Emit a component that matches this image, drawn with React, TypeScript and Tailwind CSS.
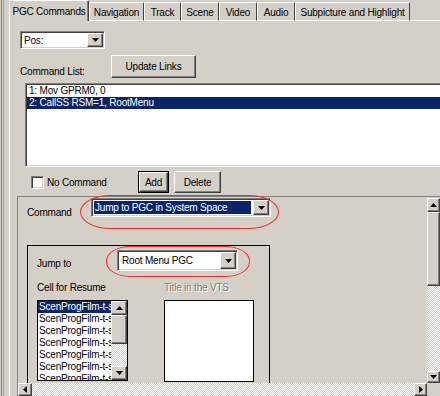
import React from 'react';

// Windows-classic 3D edges
const raised =
  'border border-t-white border-l-white border-r-[#404040] border-b-[#404040] shadow-[inset_-1px_-1px_#808080]';
const sunken =
  'border border-t-[#808080] border-l-[#808080] border-r-white border-b-white shadow-[inset_1px_1px_#404040,inset_-1px_-1px_#d4d0c8]';
const checker =
  'bg-[image:repeating-conic-gradient(#ffffff_0%_25%,#d4d0c8_0%_50%)] bg-[length:2px_2px]';

const Arrow: React.FC<{ dir: 'down' | 'up' | 'left' | 'right' }> = ({ dir }) => {
  const pts = {
    down: '0,0 7,0 3.5,4',
    up: '0,4 7,4 3.5,0',
    left: '4,0 4,7 0,3.5',
    right: '0,0 0,7 4,3.5',
  }[dir];
  const vb = dir === 'down' || dir === 'up' ? '0 0 7 4' : '0 0 4 7';
  return (
    <svg viewBox={vb} className={dir === 'down' || dir === 'up' ? 'w-[7px] h-[4px]' : 'w-[4px] h-[7px]'}>
      <polygon points={pts} fill="#000" />
    </svg>
  );
};

const DropButton: React.FC = () => (
  <div className={`w-[16px] shrink-0 bg-[#d4d0c8] flex items-center justify-center ${raised}`}>
    <Arrow dir="down" />
  </div>
);

const tabs = [
  { label: 'Navigation', w: 'w-[55px]' },
  { label: 'Track', w: 'w-[37px]' },
  { label: 'Scene', w: 'w-[38px]' },
  { label: 'Video', w: 'w-[38px]' },
  { label: 'Audio', w: 'w-[38px]' },
  { label: 'Subpicture and Highlight', w: 'w-[115px]' },
];

const cellItems = Array.from({ length: 7 }, () => 'ScenProgFilm-t-s');

export default function App() {
  return (
    <div className="relative w-[440px] h-[396px] overflow-hidden bg-[#d4d0c8] flex text-[10px] tracking-[-0.2px] leading-[13px] text-black whitespace-nowrap font-['Liberation_Sans',Arial,sans-serif]">
      {/* outer window edge */}
      <div className="w-px" />
      <div className="w-px bg-[#808080]" />
      <div className="w-px" />
      <div className="w-px bg-[#a0a0a0]" />
      <div className="w-[5px]" />

      <div className="flex-1 min-w-0 flex flex-col">
        {/* tab strip */}
        <div className="h-[21px] flex items-end shrink-0">
          <div className="w-[80px] h-[21px] shrink-0 border-t border-l border-white border-r border-r-[#404040] shadow-[inset_-1px_0_#808080] rounded-t-[2px] flex items-center justify-center">
            PGC Commands
          </div>
          {tabs.map(t => (
            <div
              key={t.label}
              className={`${t.w} h-[19px] shrink-0 border-t border-l border-white border-r border-r-[#404040] border-b border-b-white rounded-t-[2px] flex items-center justify-center pt-[1px]`}
            >
              {t.label}
            </div>
          ))}
          <div className="flex-1 h-px bg-white" />
        </div>

        {/* tab page */}
        <div className="flex-1 min-h-0 flex flex-col border-l border-white">
          {/* Pos combo */}
          <div className={`ml-[10px] mt-[10px] w-[85px] h-[18px] shrink-0 bg-white flex ${sunken} p-px`}>
            <div className="flex-1 pl-[2px] flex items-center">Pos:</div>
            <DropButton />
          </div>

          <div className="mt-[6px] flex items-end h-[23px] shrink-0">
            <div className="ml-[10px] w-[91px]">Command List:</div>
            <button className={`w-[85px] h-[23px] bg-[#d4d0c8] ${raised}`}>Update Links</button>
          </div>

          {/* command list */}
          <div className={`ml-[15px] mt-[5px] w-[430px] h-[84px] shrink-0 bg-white ${sunken} pt-px pl-px`}>
            <div className="h-[12px] pl-[2px] leading-[12px]">1: Mov GPRM0, 0</div>
            <div className="h-[12px] pl-[2px] leading-[12px] bg-[#0a246a] text-white">2: CallSS RSM=1, RootMenu</div>
          </div>

          {/* no command / add / delete */}
          <div className="mt-[4px] h-[22px] flex items-center shrink-0">
            <div className="ml-[21px] w-[107px] flex items-center">
              <div className={`w-[13px] h-[13px] bg-white ${sunken}`} />
              <span className="ml-[3px]">No Command</span>
            </div>
            <div className="border border-black">
              <button className={`w-[29px] h-[20px] bg-[#d4d0c8] ${raised}`}>Add</button>
            </div>
            <button className={`ml-[5px] w-[47px] h-[22px] bg-[#d4d0c8] ${raised}`}>Delete</button>
          </div>

          {/* command detail panel */}
          <div className="mt-[3px] ml-[7px] flex-1 min-h-0 border-t border-l border-[#808080] flex flex-col">
            <div className="flex-1 min-h-0 flex">
              <div className="flex-1 min-w-0 overflow-hidden">
                <div className="ml-[9px] mt-[1px] flex">
                  <div className="w-[64px] pt-[8px]">Command</div>
                  <div className={`w-[180px] h-[19px] bg-white flex ${sunken} p-px`}>
                    <div className="flex-1 m-px mr-[2px] bg-[#0a246a] text-white pl-px flex items-center overflow-hidden">
                      Jump to PGC in System Space
                    </div>
                    <DropButton />
                  </div>
                </div>

                <div className="ml-[9px] mt-[26px] w-[243px] h-[200px] border border-black">
                  <div className="mt-[4px] flex">
                    <div className="ml-[9px] w-[80px] pt-[7px]">Jump to</div>
                    <div className={`w-[121px] h-[21px] bg-white flex ${sunken} p-px`}>
                      <div className="flex-1 pl-[3px] flex items-center">Root Menu PGC</div>
                      <DropButton />
                    </div>
                  </div>

                  <div className="mt-[10px] flex">
                    <div className="ml-[9px] w-[127px]">Cell for Resume</div>
                    <div className="text-[#808080] [text-shadow:1px_1px_#ffffff]">Title in the VTS</div>
                  </div>

                  <div className="mt-[6px] flex items-start">
                    <div className="ml-[9px] w-[91px] h-[81px] border border-black bg-white flex">
                      <div className="flex-1 min-w-0 overflow-hidden">
                        {cellItems.map((c, i) => (
                          <div
                            key={i}
                            className={`h-[12px] leading-[12px] pl-px ${i === 0 ? 'bg-[#0a246a] text-white' : ''}`}
                          >
                            {c}
                          </div>
                        ))}
                      </div>
                      <div className="w-[16px] shrink-0 flex flex-col">
                        <div className={`h-[14px] bg-[#d4d0c8] flex items-center justify-center ${raised}`}>
                          <Arrow dir="up" />
                        </div>
                        <div className={`h-[29px] bg-[#d4d0c8] ${raised}`} />
                        <div className={`flex-1 ${checker}`} />
                        <div className={`h-[14px] bg-[#d4d0c8] flex items-center justify-center ${raised}`}>
                          <Arrow dir="down" />
                        </div>
                      </div>
                    </div>
                    <div className="ml-[36px] w-[90px] h-[82px] border border-black bg-white" />
                  </div>
                </div>
              </div>

              {/* vertical scrollbar */}
              <div className="w-[13px] shrink-0 flex flex-col pt-px">
                <div className={`h-[14px] bg-[#d4d0c8] flex items-center justify-center ${raised}`}>
                  <Arrow dir="up" />
                </div>
                <div className={`h-[74px] bg-[#d4d0c8] ${raised}`} />
                <div className={`flex-1 ${checker}`} />
                <div className={`h-[12px] bg-[#d4d0c8] flex items-center justify-center ${raised}`}>
                  <Arrow dir="down" />
                </div>
              </div>
            </div>

            {/* horizontal scrollbar */}
            <div className="h-[13px] flex shrink-0">
              <div className={`w-[14px] bg-[#d4d0c8] flex items-center justify-center ${raised}`}>
                <Arrow dir="left" />
              </div>
              <div className={`flex-1 ${checker}`} />
              <div className={`w-[13px] bg-[#d4d0c8] flex items-center justify-center ${raised}`}>
                <Arrow dir="right" />
              </div>
              <div className="w-[13px] bg-[#d4d0c8]" />
            </div>
          </div>
        </div>
      </div>

      {/* red hand-drawn annotations */}
      <div className="absolute left-[80px] top-[195px] w-[199px] h-[34px] border border-[#ff2a2a] rounded-[30px/17px] pointer-events-none" />
      <div className="absolute left-[106px] top-[246px] w-[144px] h-[31px] border border-[#ff2a2a] rounded-[24px/15px] pointer-events-none" />
    </div>
  );
}
